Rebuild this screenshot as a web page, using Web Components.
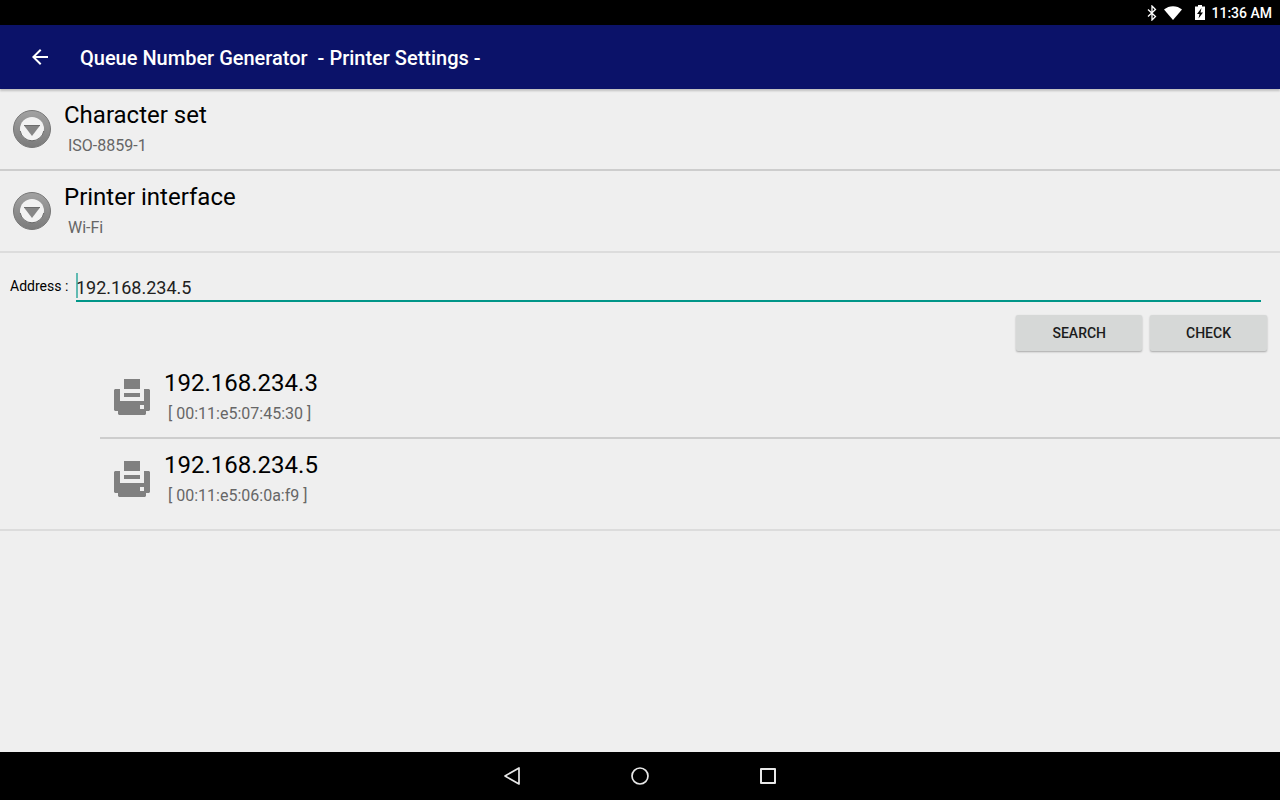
<!DOCTYPE html>
<html lang="en">
<head>
<meta charset="utf-8">
<meta name="viewport" content="width=device-width, initial-scale=1">
<title>Queue Number Generator - Printer Settings</title>
<style>
html, body {
  height: 100%;
  margin: 0;
}
body {
  background: #efefef;
  font-family: Roboto, "Liberation Sans", sans-serif;
}
</style>
</head>
<body>
<printer-settings></printer-settings>

<script>
function define(name, html) {
  window.customElements.define(name, class extends HTMLElement {
    constructor() {
      super();
      this.attachShadow({mode: 'open'}).innerHTML = html;
    }
  });
}

define('status-bar', `
  <style>
  :host {
    display: flex;
    justify-content: flex-end;
    align-items: center;
    height: 25px;
    padding-right: 8px;
    background: #000;
    color: #fff;
    font-size: 14px;
    font-weight: 500;
    line-height: 25px;
  }
  svg { display: block; fill: #fff; }
  .bt { margin-right: 7px; }
  .wifi { margin-right: 13px; }
  .battery { margin-right: 6px; }
  time { padding-top: 1px; }
  </style>
  <svg class="bt" width="10" height="16" viewBox="0 0 10 16" aria-hidden="true">
    <path d="M1 4.5 8.5 11.5 5 15V1l3.500 3.500L1 11.500" fill="none" stroke="#fff" stroke-width="1.300"/>
  </svg>
  <svg class="wifi" width="18" height="14" viewBox="0 0 18 14" aria-hidden="true">
    <path d="M0 3.500C5-1 13-1 18 3.500L9 14z"/>
  </svg>
  <svg class="battery" width="10" height="16" viewBox="0 0 10 16" aria-hidden="true">
    <path d="M3 0h4v1.500h3V15H0V1.500h3z"/>
    <path d="M6.500 3 2 9h2.500L3.500 13.500 8 7.500H5.500z" fill="#000"/>
  </svg>
  <time>11:36 AM</time>
`);

define('app-bar', `
  <style>
  :host {
    display: flex;
    align-items: center;
    height: 64px;
    background: #0b1269;
    color: #fff;
    box-shadow: 0 2px 2px rgba(0, 0, 0, .2);
    position: relative;
  }
  button {
    width: 80px;
    height: 64px;
    padding: 0;
    border: 0;
    background: none;
  }
  svg { display: block; margin: auto; }
  h1 {
    margin: 0;
    padding-top: 2px;
    font-size: 20px;
    font-weight: 500;
    line-height: 24px;
    white-space: pre;
  }
  </style>
  <button aria-label="Back">
    <svg width="24" height="24" viewBox="0 0 24 24" fill="#fff">
      <path d="M20 11H7.830l5.590-5.590L12 4l-8 8 8 8 1.410-1.410L7.830 13H20v-2z"/>
    </svg>
  </button>
  <h1><slot></slot></h1>
`);

define('list-row', `
  <style>
  :host { display: block; }
  button {
    display: flex;
    align-items: center;
    width: 100%;
    height: 80px;
    padding: 0 8px;
    border: 0;
    background: none;
    font: inherit;
    text-align: left;
  }
  .text {
    margin-left: 8px;
    padding-top: 2px;
  }
  .title, .detail { display: block; }
  .title {
    color: #000;
    font-size: 24px;
    line-height: 32px;
  }
  .detail {
    padding-left: 4px;
    color: #666;
    font-size: 16px;
    line-height: 30px;
  }
  </style>
  <button>
    <slot name="icon"></slot>
    <span class="text">
      <span class="title"><slot></slot></span>
      <span class="detail"><slot name="detail"></slot></span>
    </span>
  </button>
`);

define('expand-icon', `
  <style>
  :host { display: block; width: 48px; height: 48px; }
  svg { display: block; }
  </style>
  <svg width="48" height="48" viewBox="0 0 48 48" aria-hidden="true">
    <defs>
      <linearGradient id="ring" x1="0" y1="0" x2="0" y2="1">
        <stop offset="0" stop-color="#a2a2a2"/>
        <stop offset="1" stop-color="#7b7b7b"/>
      </linearGradient>
    </defs>
    <circle cx="24" cy="24" r="18.500" fill="url(#ring)" stroke="#777"/>
    <circle cx="24" cy="24" r="12" fill="#f2f2f2"/>
    <path d="M12.200 26a12 12 0 0 0 23.600 0" fill="none" stroke="#666"/>
    <path d="M16 20.500h16L24 31z" fill="#868686"/>
    <path d="M16 20.500h16" stroke="#6d6d6d"/>
  </svg>
`);

define('printer-icon', `
  <style>
  :host { display: block; width: 48px; height: 48px; }
  svg { display: block; }
  </style>
  <svg width="48" height="48" viewBox="0 0 48 48" fill="#808080" aria-hidden="true">
    <path d="M16 6h16v10H16zM16 20h16v4H16z"/>
    <path fill-rule="evenodd" d="M7 16h5v12h24V16h5l1 1v20l-1 1h-3v3l-1 1H11l-1-1v-3H7l-1-1V17zM32 32v4h4v-4z"/>
  </svg>
`);

define('address-field', `
  <style>
  :host {
    display: flex;
    align-items: center;
    padding: 19px 19px 0 10px;
  }
  label {
    flex: none;
    width: 66px;
    padding-bottom: 2px;
    color: #000;
    font-size: 14px;
    line-height: 28px;
  }
  .box {
    flex: 1;
    position: relative;
    border-bottom: 2px solid #009688;
  }
  input {
    display: block;
    box-sizing: border-box;
    width: 100%;
    height: 28px;
    padding: 2px 0 0;
    border: 0;
    outline: 0;
    background: none;
    color: #212121;
    font: 18px/26px Roboto, "Liberation Sans", sans-serif;
  }
  /* cursor in front of the first digit */
  .box::before {
    content: "";
    position: absolute;
    left: 0;
    top: 1px;
    width: 2px;
    height: 25px;
    background: #009688;
    opacity: .6;
  }
  </style>
  <label for="address">Address :</label>
  <div class="box"><input id="address" type="text" value="192.168.234.5"></div>
`);

define('raised-button', `
  <style>
  :host { display: block; }
  button {
    display: block;
    height: 36px;
    padding: 0 36px;
    border: 0;
    border-radius: 2px;
    background: #d6d8d7;
    box-shadow: 0 1px 2px rgba(0, 0, 0, .3);
    color: #1c1c1c;
    font: 500 14px/36px Roboto, "Liberation Sans", sans-serif;
    text-transform: uppercase;
  }
  </style>
  <button><slot></slot></button>
`);

define('nav-bar', `
  <style>
  :host {
    display: flex;
    justify-content: center;
    height: 48px;
    background: #000;
  }
  button {
    width: 128px;
    height: 48px;
    padding: 0;
    border: 0;
    background: none;
  }
  svg { display: block; margin: auto; fill: none; stroke: #e8e8e8; stroke-width: 2; stroke-linejoin: round; }
  </style>
  <button aria-label="Back"><svg width="24" height="24" viewBox="0 0 24 24"><path d="M19 4v16L5 12z" stroke-width="1.700"/></svg></button>
  <button aria-label="Home"><svg width="24" height="24" viewBox="0 0 24 24"><circle cx="12" cy="12" r="8" stroke-width="1.700"/></svg></button>
  <button aria-label="Recent apps"><svg width="24" height="24" viewBox="0 0 24 24"><path d="M5 5h14v14H5z"/></svg></button>
`);

define('printer-settings', `
  <style>
  :host {
    display: flex;
    flex-direction: column;
    min-height: 100%;
  }
  main { flex: 1; }
  list-row { border-bottom: 2px solid #cdcdcd; }
  .last { border-color: #dcdcdc; }
  .buttons {
    display: flex;
    justify-content: flex-end;
    gap: 8px;
    padding: 13px 13px 6px;
  }
  .printers {
    padding-bottom: 8px;
    border-bottom: 2px solid #dcdcdc;
  }
  .printers list-row { margin-left: 100px; }
  .printers list-row:last-child { border-color: transparent; }
  </style>
  <status-bar></status-bar>
  <app-bar>Queue Number Generator  - Printer Settings -</app-bar>
  <main>
    <list-row>
      <expand-icon slot="icon"></expand-icon>
      Character set
      <span slot="detail">ISO-8859-1</span>
    </list-row>
    <list-row class="last">
      <expand-icon slot="icon"></expand-icon>
      Printer interface
      <span slot="detail">Wi-Fi</span>
    </list-row>
    <address-field></address-field>
    <div class="buttons">
      <raised-button>Search</raised-button>
      <raised-button>Check</raised-button>
    </div>
    <div class="printers">
      <list-row>
        <printer-icon slot="icon"></printer-icon>
        192.168.234.3
        <span slot="detail">[ 00:11:e5:07:45:30 ]</span>
      </list-row>
      <list-row>
        <printer-icon slot="icon"></printer-icon>
        192.168.234.5
        <span slot="detail">[ 00:11:e5:06:0a:f9 ]</span>
      </list-row>
    </div>
  </main>
  <nav-bar></nav-bar>
`);
</script>
</body>
</html>
